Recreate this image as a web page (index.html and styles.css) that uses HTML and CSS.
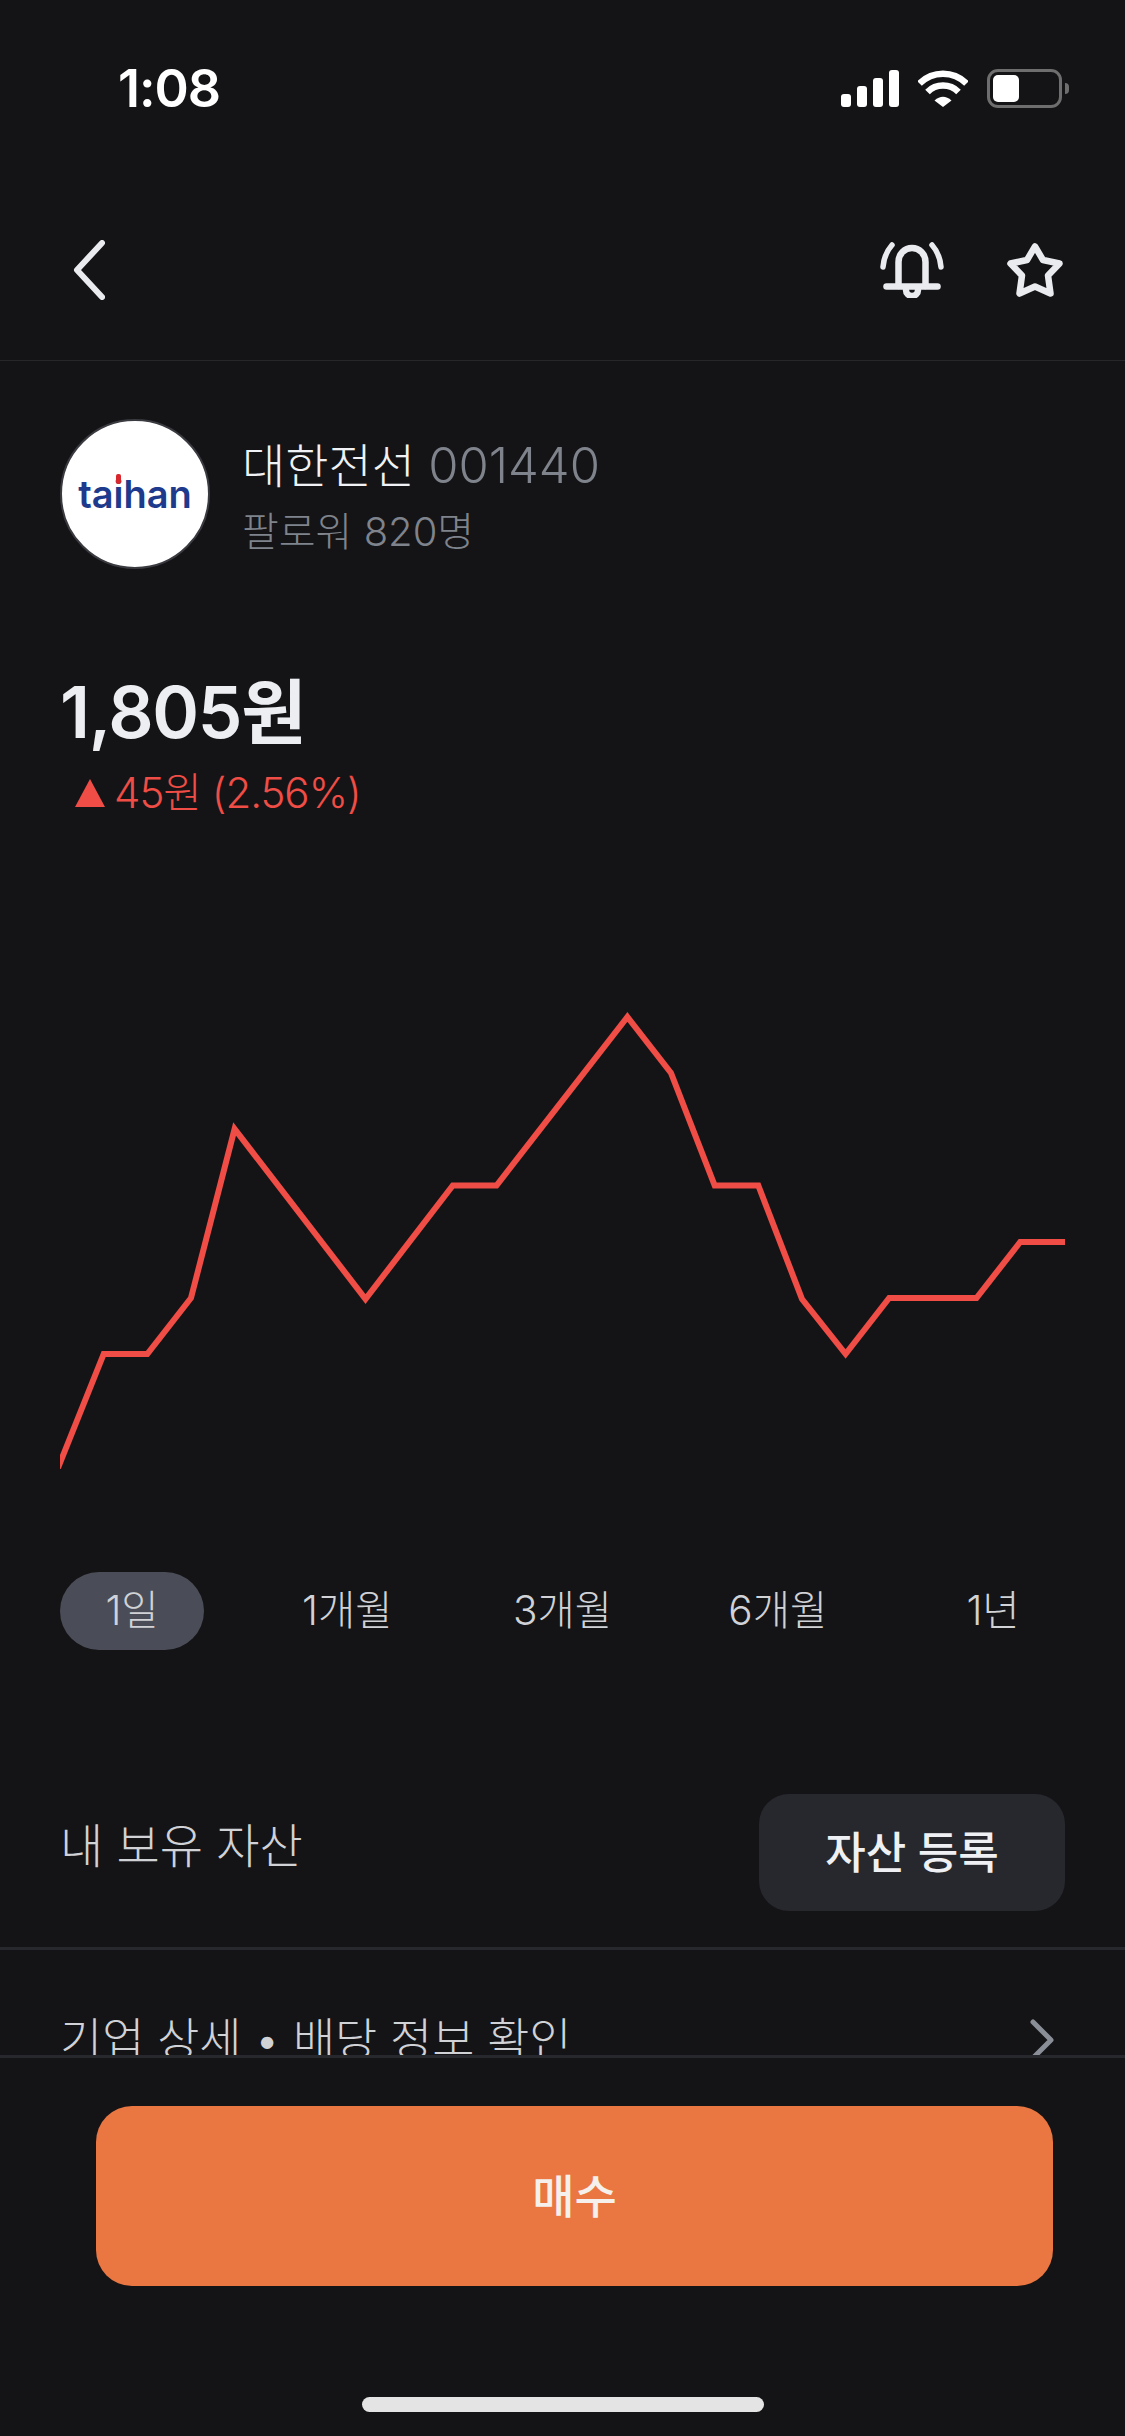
FILE: index.html
```html
<!DOCTYPE html>
<html lang="ko">
<head>
<meta charset="utf-8">
<title>대한전선</title>
<link rel="stylesheet" href="styles.css">
</head>
<body>
<div class="app">
  <main class="content">
    <div class="status">
      <span class="time">1:08</span>
      <div class="status-icons">
        <div class="signal"><i class="b1"></i><i class="b2"></i><i class="b3"></i><i class="b4"></i></div>
        <svg class="wifi" viewBox="0 0 50 37"><path class="wifi-arc" d="M1.5 13.5A33 33 0 0 1 48.500 13.500"/><path class="wifi-arc" d="M9.500 22A22 22 0 0 1 40.500 22"/><path class="wifi-dot" d="M25 37L16.500 30.500Q25 23 33.500 30.500Z"/></svg>
        <div class="battery"><div class="battery-body"><div class="battery-fill"></div></div><div class="battery-nub"></div></div>
      </div>
    </div>
    <nav class="nav">
      <svg class="back" viewBox="0 0 32 60"><path d="M29 3L4 30L29 57"/></svg>
      <div class="nav-actions">
        <svg class="bell" viewBox="0 0 64 56"><path d="M18.500 44V20a13.500 14 0 0 1 27 0V44"/><path d="M6.500 44.500H57.500"/><path d="M26 48a6 6 0 0 0 12 0"/><path class="thin" d="M12 3Q4 12 3 25"/><path class="thin" d="M52 3Q60 12 61 25"/></svg>
        <svg class="star" viewBox="0 0 56 54"><path d="M28 3.500L36 17L52.500 20.500L41 32.500L43.500 50.500L28 43.500L12.500 50.500L15 32.500L3.500 20.500L20 17Z"/></svg>
      </div>
    </nav>
    <section class="profile">
      <div class="logo"><span class="logo-text">ta<span class="logo-i">i</span>han</span></div>
      <div class="profile-text">
        <div class="name">대한전선 <span class="code">001440</span></div>
        <div class="followers">팔로워 820명</div>
      </div>
    </section>
    <section class="quote">
      <div class="price">1,805원</div>
      <div class="change"><span class="tri"></span><span>45원 (2.56%)</span></div>
    </section>
    <svg class="chart" viewBox="0 0 1005 480"><polyline points="-2,468 43.700,354 87.300,354 131,298 174.600,129 305.500,299 392.800,185.500 436.500,185.500 567.400,17 611,73 654.700,185.500 698.300,185.500 742,299 785.600,354 829.200,298 916.500,298 960.200,242 1008,242"/></svg>
    <div class="tabs">
      <span class="tab active">1일</span>
      <span class="tab">1개월</span>
      <span class="tab">3개월</span>
      <span class="tab">6개월</span>
      <span class="tab">1년</span>
    </div>
    <section class="assets">
      <span class="assets-title">내 보유 자산</span>
      <button class="assets-btn">자산 등록</button>
    </section>
    <div class="link-row">
      <span>기업 상세 • 배당 정보 확인</span>
      <svg class="chev" viewBox="0 0 24 42"><path d="M3 3L21 21L3 39"/></svg>
    </div>
  </main>
  <footer class="footer">
    <button class="buy">매수</button>
    <div class="home"></div>
  </footer>
</div>
</body>
</html>
```
FILE: styles.css
```css
* { box-sizing: border-box; }
html, body { margin: 0; padding: 0; background: #141416; }
body { font-family: "Inter", "Noto Sans CJK KR", sans-serif; color: #e9ebef; }
.app { width: 1125px; height: 2436px; display: flex; flex-direction: column; overflow: hidden; background: #141416; }
.content { flex: 1; min-height: 0; overflow: hidden; }

.status { height: 180px; padding: 69px 56px 0 118px; display: flex; justify-content: space-between; align-items: flex-start; }
.time { font-size: 52px; line-height: 39px; font-weight: 600; color: #fff; letter-spacing: -1px; }
.status-icons { display: flex; align-items: center; gap: 19px; height: 39px; }
.signal { display: flex; align-items: flex-end; gap: 6px; height: 37px; }
.signal i { display: block; width: 10px; background: #fff; border-radius: 3px; }
.b1 { height: 13px; } .b2 { height: 21px; } .b3 { height: 29px; } .b4 { height: 37px; }
.wifi { width: 50px; height: 37px; }
.wifi-arc { fill: none; stroke: #fff; stroke-width: 6.500; }
.wifi-dot { fill: #fff; }
.battery { display: flex; align-items: center; gap: 3px; }
.battery-body { width: 75px; height: 39px; border: 3px solid #6e6e6e; border-radius: 11px; padding: 3px; }
.battery-fill { width: 26px; height: 100%; background: #fff; border-radius: 5px; }
.battery-nub { width: 4px; height: 11px; background: #6e6e6e; border-radius: 0 4px 4px 0; }

.nav { height: 181px; border-bottom: 1px solid #26272b; padding: 0 62px 0 73px; display: flex; justify-content: space-between; align-items: center; }
.nav svg { fill: none; stroke: #e9ebef; stroke-linecap: round; stroke-linejoin: round; display: block; }
.back { width: 32px; height: 60px; stroke-width: 6; }
.nav-actions { display: flex; align-items: center; gap: 63px; }
.bell { width: 64px; height: 56px; stroke-width: 6.500; }
.bell .thin { stroke-width: 5.500; }
.star { width: 56px; height: 54px; stroke-width: 6.500; }

.profile { margin-top: 58px; padding: 0 60px; display: flex; align-items: center; gap: 32px; }
.logo { width: 150px; height: 150px; border-radius: 50%; background: #fff; border: 2px solid #3a3b40; display: flex; align-items: center; justify-content: center; }
.logo-text { font-family: "Inter", sans-serif; font-size: 38px; line-height: 46px; font-weight: 600; color: #1d3a8c; }
.logo-i { position: relative; }
.logo-i::after { content: ""; position: absolute; left: 2px; top: 3px; width: 5px; height: 10px; background: #d9272e; border-radius: 2px; }
.profile-text { display: flex; flex-direction: column; gap: 14px; position: relative; top: 3px; }
.name { font-size: 47px; line-height: 56px; font-weight: 300; color: #f0f2f5; }
.code { color: #7f838c; font-size: 49px; font-weight: 300; }
.followers { font-size: 40px; line-height: 48px; font-weight: 300; color: #7f838c; }

.quote { margin-top: 103px; padding: 0 60px; }
.price { font-size: 71px; line-height: 80px; font-weight: 600; color: #eceef2; letter-spacing: -1.300px; }
.change { margin-top: 16px; height: 50px; display: flex; align-items: center; gap: 9px; padding-left: 15px; font-size: 42px; line-height: 50px; font-weight: 300; color: #ef4d45; letter-spacing: -1px; }
.tri { width: 0; height: 0; border-left: 15px solid transparent; border-right: 15px solid transparent; border-bottom: 28px solid #ef4d45; }

.chart { display: block; width: 1005px; height: 480px; margin: 182px 0 0 60px; }
.chart polyline { fill: none; stroke: #ef4d45; stroke-width: 6; stroke-linejoin: miter; }

.tabs { margin-top: 92px; padding: 0 60px; display: flex; justify-content: space-between; }
.tab { width: 144px; height: 78px; padding-bottom: 8px; border-radius: 39px; display: flex; align-items: center; justify-content: center; font-size: 40.500px; font-weight: 300; color: #d0d2d6; }
.tab.active { background: #4a4d57; }

.assets { margin-top: 144px; padding: 0 60px 36px; border-bottom: 3px solid #27282d; display: flex; justify-content: space-between; align-items: center; }
.assets-title { font-size: 47px; line-height: 60px; font-weight: 300; color: #d0d2d6; position: relative; top: -7px; }
.assets-btn { width: 306px; height: 117px; border: 0; border-radius: 30px; background: #27282d; color: #eef0f3; font-family: inherit; font-size: 44px; font-weight: 500; padding: 0 0 5px; }

.link-row { padding: 60px 71px 0 60px; display: flex; justify-content: space-between; align-items: center; font-size: 45.800px; line-height: 60px; font-weight: 300; color: #d0d2d6; }
.chev { width: 24px; height: 42px; fill: none; stroke: #8a8e96; stroke-width: 5; stroke-linecap: round; stroke-linejoin: round; display: block; }

.footer { flex: none; border-top: 3px solid #27282d; height: 381px; padding-top: 48px; display: flex; flex-direction: column; align-items: center; }
.buy { width: 957px; height: 180px; flex: none; border: 0; border-radius: 36px; background: #ea7742; color: #f5f0ec; font-family: inherit; font-size: 46px; font-weight: 500; padding: 0 0 6px; margin-left: 24px; }
.home { width: 402px; height: 15px; margin-top: 111px; flex: none; border-radius: 8px; background: #e4e4e4; }
```
